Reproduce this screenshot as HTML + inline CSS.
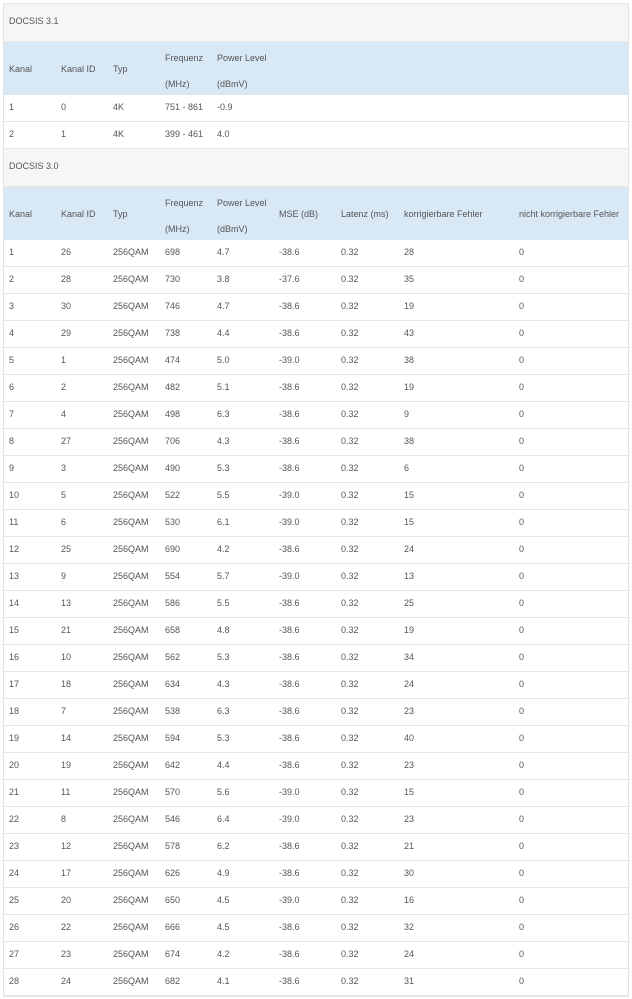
<!DOCTYPE html>
<html><head><meta charset="utf-8"><style>
*{margin:0;padding:0;box-sizing:border-box}
body{width:632px;height:999px;background:#fff;font-family:"Liberation Sans",sans-serif;font-size:9px;color:#555;position:relative;overflow:hidden}
#card{position:absolute;left:3px;top:3px;width:626px;height:994px;border:1px solid #e3e3e3;border-top-color:#e8e8e8}
.r{position:absolute;left:0;width:624px;border-bottom:1px solid #e6e6e6}
.t{background:#f6f6f4;height:38px}
.h{background:#d9e8f5;height:53px;border-bottom:none}
.d{height:27px;background:#fff}
.r span{position:absolute;white-space:nowrap}
.t span{top:12px;left:5px}
.d span{top:7px}
.h span{line-height:26px}
</style></head><body><div id="card"></div>
<script>
var X=[5,57,109,161,213,275,337,400,515];
var out='';
function row(cls,top,cells,h){
 var s='<div class="r '+cls+'" style="top:'+(top-3)+'px">';
 cells.forEach(function(c,i){
  if(c==null)return;
  if(cls=='h'){
   if(c.indexOf('|')>=0){var p=c.split('|');s+='<span style="left:'+X[i]+'px;top:3px">'+p[0]+'<br>'+p[1]+'</span>';}
   else s+='<span style="left:'+X[i]+'px;top:14px">'+c+'</span>';
  } else s+='<span style="left:'+X[i]+'px">'+c+'</span>';
 });
 return s+'</div>';
}
out+='<div class="r t" style="top:0px"><span>DOCSIS 3.1</span></div>';
out+=row('h',41,['Kanal','Kanal ID','Typ','Frequenz|(MHz)','Power Level|(dBmV)']);
out+=row('d',94,['1','0','4K','751 - 861','-0.9']);
out+=row('d',121,['2','1','4K','399 - 461','4.0']);
out+='<div class="r t" style="top:145px"><span>DOCSIS 3.0</span></div>';
out+=row('h',186,['Kanal','Kanal ID','Typ','Frequenz|(MHz)','Power Level|(dBmV)','MSE (dB)','Latenz (ms)','korrigierbare Fehler','nicht korrigierbare Fehler']);
var D=[[26,698,'4.7','-38.6',28],[28,730,'3.8','-37.6',35],[30,746,'4.7','-38.6',19],[29,738,'4.4','-38.6',43],[1,474,'5.0','-39.0',38],[2,482,'5.1','-38.6',19],[4,498,'6.3','-38.6',9],[27,706,'4.3','-38.6',38],[3,490,'5.3','-38.6',6],[5,522,'5.5','-39.0',15],[6,530,'6.1','-39.0',15],[25,690,'4.2','-38.6',24],[9,554,'5.7','-39.0',13],[13,586,'5.5','-38.6',25],[21,658,'4.8','-38.6',19],[10,562,'5.3','-38.6',34],[18,634,'4.3','-38.6',24],[7,538,'6.3','-38.6',23],[14,594,'5.3','-38.6',40],[19,642,'4.4','-38.6',23],[11,570,'5.6','-39.0',15],[8,546,'6.4','-39.0',23],[12,578,'6.2','-38.6',21],[17,626,'4.9','-38.6',30],[20,650,'4.5','-39.0',16],[22,666,'4.5','-38.6',32],[23,674,'4.2','-38.6',24],[24,682,'4.1','-38.6',31]];
D.forEach(function(d,i){out+=row('d',239+27*i,[String(i+1),String(d[0]),'256QAM',String(d[1]),d[2],d[3],'0.32',String(d[4]),'0']);});
document.getElementById('card').innerHTML=out;
</script>
</body></html>
